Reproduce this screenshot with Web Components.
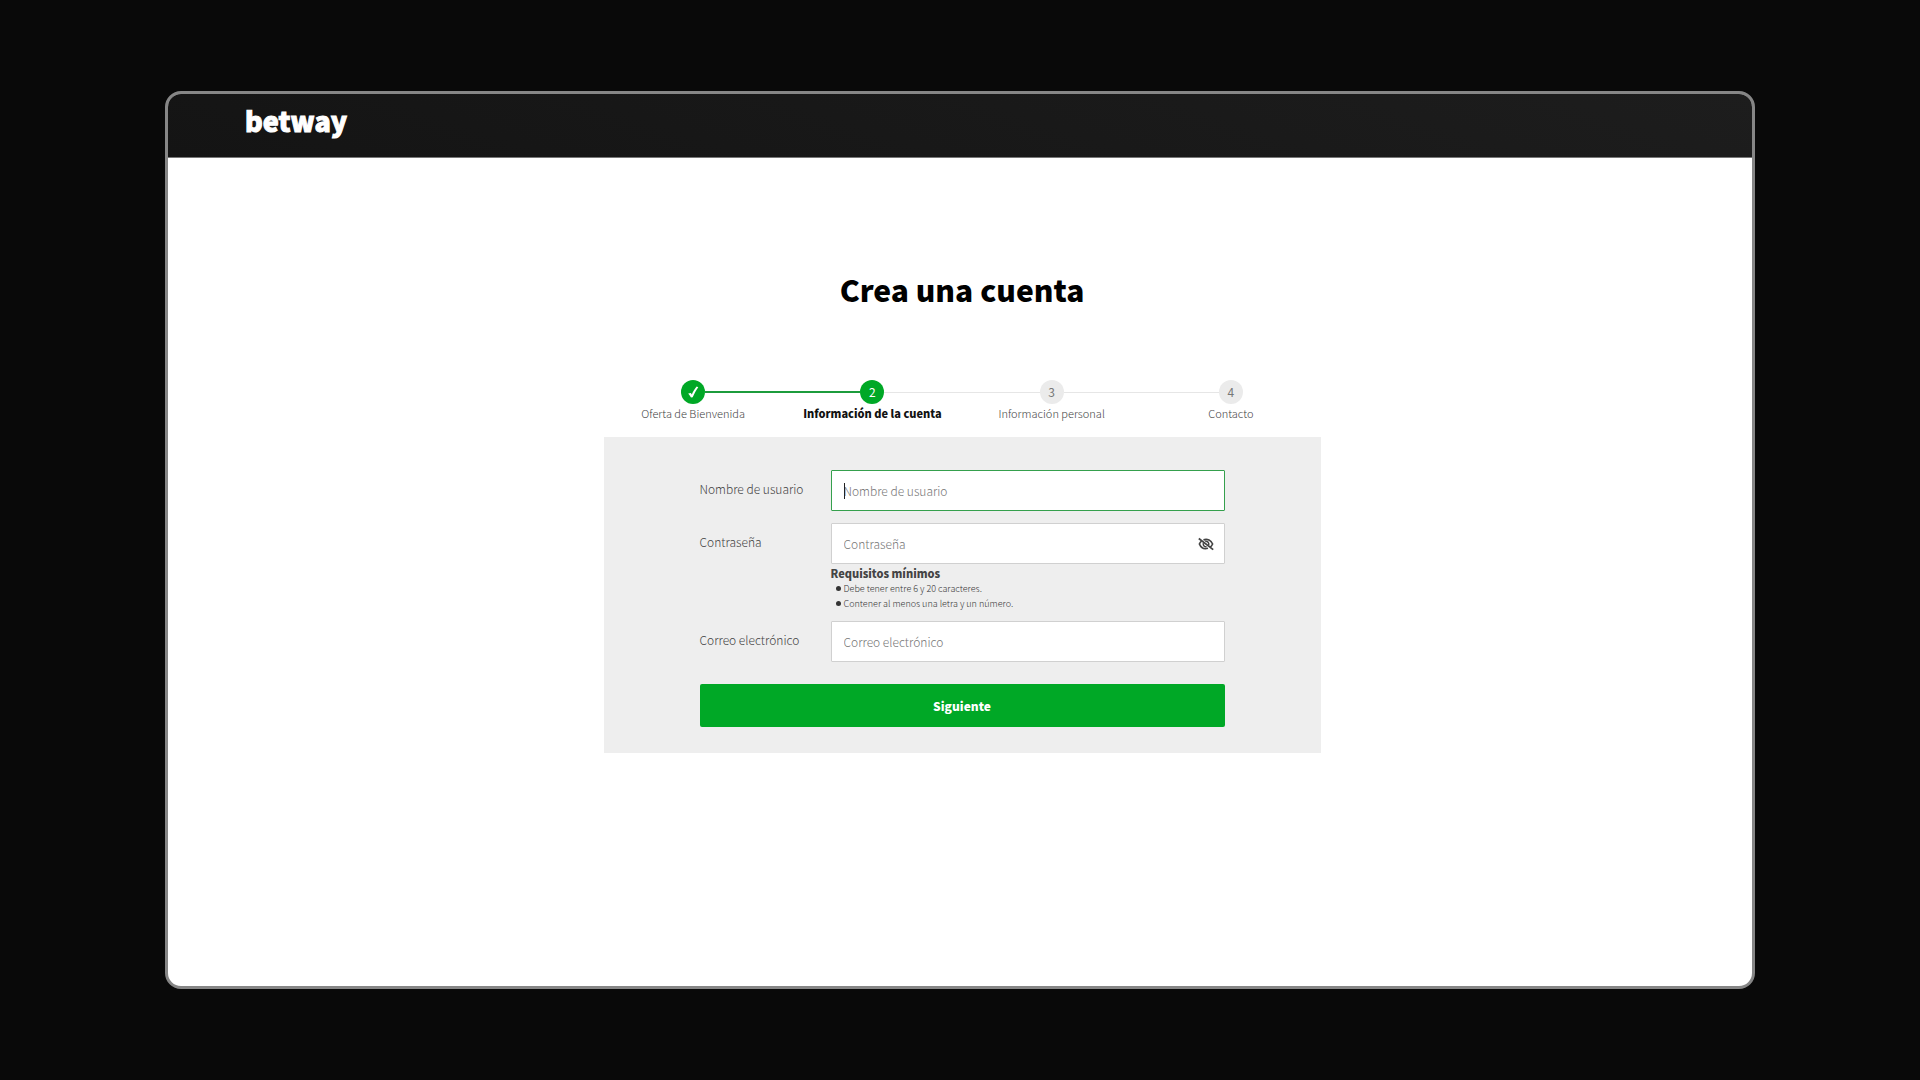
<!DOCTYPE html>
<html lang="es">
<head>
<meta charset="utf-8">
<meta name="viewport" content="width=device-width, initial-scale=1">
<title>Crea una cuenta</title>
<style>
  body {
    margin: 0;
    background: #090909;
    font-family: "Noto Sans CJK SC", "Noto Sans", sans-serif;
    font-weight: 300;
    color: #444;
    --green: #00a826;
    --panel: #eee;
  }
</style>
</head>
<body>
<bw-app>
  <bw-header slot="header"></bw-header>
  <bw-steps>
    <bw-step state="done">Oferta de Bienvenida</bw-step>
    <bw-step state="current" number="2">Información de la cuenta</bw-step>
    <bw-step number="3">Información personal</bw-step>
    <bw-step number="4">Contacto</bw-step>
  </bw-steps>
  <bw-form>
    <bw-field label="Nombre de usuario" type="text" active></bw-field>
    <bw-field label="Contraseña" type="password">
      <bw-rules heading="Requisitos mínimos"></bw-rules>
    </bw-field>
    <bw-field label="Correo electrónico" type="email"></bw-field>
    <bw-submit>Siguiente</bw-submit>
  </bw-form>
</bw-app>

<script>
const define = (name, html, setup) => {
  const tpl = document.createElement('template');
  tpl.innerHTML = html;
  customElements.define(name, class extends HTMLElement {
    constructor() {
      super();
      this.attachShadow({ mode: 'open' }).append(tpl.content.cloneNode(true));
    }
    connectedCallback() {
      if (setup) setup(this, s => this.shadowRoot.querySelector(s));
    }
  });
};

define('bw-app', `
<style>
  :host { display: flex; box-sizing: border-box; min-height: 100vh; padding: 91px 165px; }
  .window { flex: 1; min-width: 0; display: flex; flex-direction: column; box-sizing: border-box;
    border: 3px solid #868686; border-radius: 16px; overflow: hidden; background: #fff; }
  main { padding: 107px 0 40px 4px; }
  .column { max-width: 717px; margin: 0 auto; }
  h1 { margin: 0 0 67px; font-size: 30px; line-height: 48px; font-weight: 900; color: #000; text-align: center; }
</style>
<div class="window">
  <slot name="header"></slot>
  <main><div class="column"><h1>Crea una cuenta</h1><slot></slot></div></main>
</div>`);

define('bw-header', `
<style>
  :host { display: block; }
  header { display: flex; padding: 7px 77px 16px; background: linear-gradient(20deg, #141414, #1d1d1d);
    border-bottom: 1px solid #777; }
  a { font-size: 27px; line-height: 40px; font-weight: 900; color: #fff; text-decoration: none;
    -webkit-text-stroke: 1px #fff; }
</style>
<header><a href="#">betway</a></header>`);

define('bw-steps', `
<style>
  :host { display: block; }
  nav { display: grid; grid-template-columns: repeat(4, 1fr); padding-bottom: 15px; }
</style>
<nav aria-label="Pasos"><slot></slot></nav>`);

define('bw-step', `
<style>
  :host { display: flex; flex-direction: column; align-items: center; font-size: 11px; color: #444; }
  .track { display: flex; align-items: center; align-self: stretch; }
  .track::before, .track::after { content: ""; flex: 1; height: 1px; background: #e6e6e6; }
  .dot { display: flex; align-items: center; justify-content: center; width: 24px; height: 24px;
    border-radius: 50%; background: #ebebeb; color: #777; font-size: 12px; line-height: 24px; font-weight: 400; }
  .name { line-height: 18px; white-space: nowrap; }
  svg { display: none; width: 14px; height: 14px; }
  :host(:first-child) .track::before, :host(:last-child) .track::after { background: none; }
  :host([state]) .dot { background: var(--green); color: #fff; }
  :host([state="done"]) .track::after, :host([state="current"]) .track::before { height: 2px; background: #1c9c3c; }
  :host([state="current"]) .name { font-weight: 900; color: #111; }
  :host([state="done"]) svg { display: block; }
</style>
<div class="track"><span class="dot"><svg viewBox="0 0 14 14" aria-hidden="true"><path d="M2.2 8.4 4.9 8 5.8 9.4C7 6.500 8.800 3.700 10.700 1.500L12.300 2.200C10.200 5.200 8.200 8.700 6.700 12.300L5 12.500C4.200 10.900 3.300 9.600 2.200 8.400Z" fill="#fff"/></svg></span></div>
<span class="name"><slot></slot></span>`, (el, $) => {
  if (el.hasAttribute('number')) $('.dot').append(el.getAttribute('number'));
});

define('bw-form', `
<style>
  :host { display: block; background: var(--panel); }
  form { display: flex; flex-direction: column; padding: 33px 96px 26px; }
</style>
<form novalidate><slot></slot></form>`);

define('bw-field', `
<style>
  :host { display: grid; grid-template-columns: 131px 1fr; margin-bottom: 12px; font-size: 12px; }
  label { line-height: 38px; color: #444; }
  .box { display: flex; align-items: center; position: relative; box-sizing: border-box; height: 41px;
    border: 1px solid #d0d0d0; border-radius: 1px; background: #fff; }
  input { flex: 1; min-width: 0; height: 39px; box-sizing: border-box; padding: 0 12px; border: 0; outline: 0;
    background: none; font: inherit; color: #333; }
  input::placeholder { color: #777; opacity: 1; }
  .caret { display: none; position: absolute; left: 12px; top: 12px; width: 1px; height: 16px; background: #222; }
  button { display: none; margin: 0 10px 0 0; padding: 0; border: 0; background: none; width: 16px; height: 16px; }
  svg { display: block; width: 16px; height: 16px; }
  :host([active]) .box { border-color: #35a04d; }
  :host([active]) .caret { display: block; }
  :host([type="password"]) { margin-bottom: 10px; }
  :host([type="password"]) button { display: block; }
  :host([type="email"]) { margin-bottom: 22px; }
</style>
<label for="control"></label>
<div>
  <div class="box">
    <input id="control"><span class="caret"></span>
    <button type="button" aria-label="Mostrar contraseña"><svg viewBox="0 0 16 16" fill="none" stroke="#444"><path d="M5.500 3.900C9.500 2.400 13 4.600 14.600 8 14 9.300 13.200 10.400 12.200 11.200M3.500 5.200C2.600 5.900 1.900 6.800 1.400 8 3 11.800 6.500 13.300 10 12.300" stroke-width="1.700"/><path d="M7.200 5.300C9.700 4.900 11.300 7 10.700 9.200M5.300 7.200C4.900 9.500 6.500 11 8.600 10.700" stroke-width="1.500"/><path d="M.8 2.500 15.200 13.600" stroke-width="1.700"/></svg></button>
  </div>
  <slot></slot>
</div>`, (el, $) => {
  const text = el.getAttribute('label');
  $('label').textContent = text;
  $('input').type = el.getAttribute('type');
  $('input').placeholder = text;
});

define('bw-rules', `
<style>
  :host { display: block; padding-top: 2px; font-size: 9px; line-height: 15px; color: #333; }
  strong { display: block; font-size: 11px; font-weight: 900; color: #444; }
  ul { margin: 0; padding: 0; list-style: none; }
  li { display: flex; align-items: center; gap: 3px; padding-left: 5px; }
  li::before { content: ""; width: 5px; height: 5px; border-radius: 50%; background: #333; }
</style>
<strong></strong>
<ul><li>Debe tener entre 6 y 20 caracteres.</li><li>Contener al menos una letra y un número.</li></ul>`, (el, $) => {
  $('strong').textContent = el.getAttribute('heading');
});

define('bw-submit', `
<style>
  :host { display: block; }
  button { display: block; width: 100%; height: 43px; padding: 0; border: 0; border-radius: 2px;
    background: var(--green); color: #fff; font: inherit; font-size: 12px; font-weight: 900; cursor: pointer; }
</style>
<button type="submit"><slot></slot></button>`);
</script>
</body>
</html>
